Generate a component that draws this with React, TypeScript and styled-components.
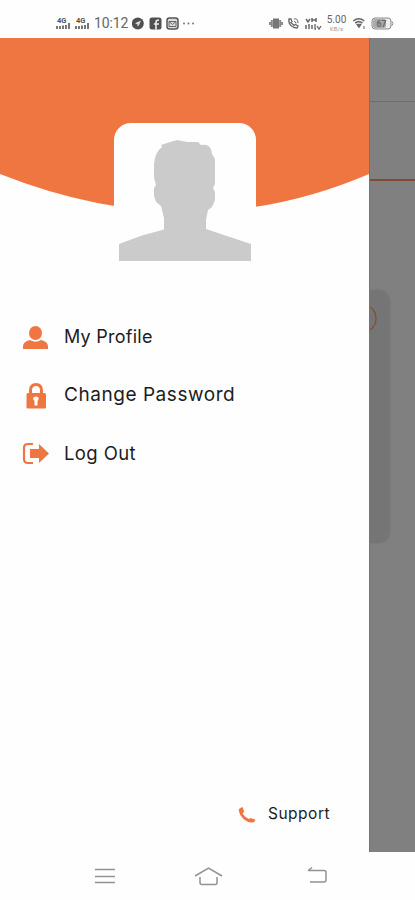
import React from "react";
import styled, { createGlobalStyle } from "styled-components";

const ORANGE = "#ef7541";

const GlobalStyle = createGlobalStyle`
  * { box-sizing: border-box; }
  body { margin: 0; background: #fff; font-family: Inter, "Open Sans", sans-serif; }
  svg { display: block; flex: none; }
`;

const Screen = styled.div`
  width: 415px;
  height: 900px;
  display: flex;
  flex-direction: column;
  overflow: hidden;
  background: #fefefe;
`;

const StatusBar = styled.header`
  height: 38px;
  flex: none;
  display: flex;
  justify-content: space-between;
  padding: 15px 21px 0 56px;
  color: #666;
`;

const StatusGroup = styled.div<{ $gap: number }>`
  display: flex;
  align-items: center;
  height: 17px;
  gap: ${(p) => p.$gap}px;
`;

const Clock = styled.span`
  font: 14px/17px Roboto, sans-serif;
  width: 34px;
  white-space: nowrap;
  letter-spacing: -0.1px;
`;

const Speed = styled.div`
  width: 21px;
  display: flex;
  flex-direction: column;
  align-items: center;
  font: 10px/10px Roboto, sans-serif;
`;

const SpeedUnit = styled.span`
  font-size: 6px;
  line-height: 7px;
  color: #999;
`;

const Body = styled.div`
  height: 814px;
  flex: none;
  display: flex;
`;

const Drawer = styled.aside`
  width: 369px;
  flex: none;
  display: flex;
  flex-direction: column;
  background: #fefefe;
`;

const Hero = styled.div`
  position: relative;
  height: 270px;
  padding: 85px 0 0 114px;
`;

const Curve = styled.svg`
  position: absolute;
  inset: 0;
`;

const Avatar = styled.div`
  position: relative;
  width: 142px;
  height: 143px;
  border-radius: 17px 17px 0 0;
  background: #fefefe;
`;

const Menu = styled.nav`
  display: flex;
  flex-direction: column;
  flex: 1;
`;

const MenuItem = styled.a`
  height: 58px;
  display: flex;
  align-items: center;
  padding-left: 22px;
  gap: 15px;
`;

const Label = styled.span<{ $size: number; $spacing?: number }>`
  font-size: ${(p) => p.$size}px;
  letter-spacing: ${(p) => p.$spacing ?? 0}px;
  font-weight: 400;
  line-height: 24px;
  color: #1c1c1c;
  white-space: nowrap;
`;

const Support = styled.a`
  display: flex;
  align-items: center;
  gap: 12px;
  height: 24px;
  margin: 0 0 26px 238px;
`;

const Backdrop = styled.main`
  flex: 1;
  display: flex;
  flex-direction: column;
  overflow: hidden;
  background: #808080;
  border-left: 1px solid #707575;
`;

const AppHeader = styled.div`
  height: 64px;
  flex: none;
  border-bottom: 1px solid #6e6e6e;
`;

const TabStrip = styled.div`
  height: 79px;
  flex: none;
  border-bottom: 2px solid #804a30;
`;

const Panel = styled.div`
  width: 20px;
  height: 253px;
  margin-top: 109px;
  padding-top: 16px;
  border-radius: 0 12px 12px 0;
  background: #757575;
  box-shadow: 0 0 3px #777;
`;

const NavBar = styled.footer`
  height: 48px;
  display: flex;
  align-items: center;
  padding-left: 93px;
`;

const NavButton = styled.span<{ $width: number }>`
  width: ${(p) => p.$width}px;
`;

const Signal = () => (
  <svg width="15" height="15" viewBox="0 0 15 15">
    <text x="1" y="7" fontSize="7.5" fontWeight="700" fontFamily="Roboto, sans-serif" fill="#555">4G</text>
    <path d="M1 10v3M4 10v3M7 9.5v3.5M10 9v4M13 7v6" stroke="#555" strokeWidth="1.6" />
  </svg>
);

export default function App() {
  return (
    <>
      <GlobalStyle />
      <Screen>
        <StatusBar>
          <StatusGroup $gap={4}>
            <Signal />
            <Signal />
            <Clock>10:12</Clock>
            <svg width="13" height="13" viewBox="0 0 13 13">
              <circle cx="5.8" cy="6.5" r="6" fill="#505050" />
              <path d="M3 6.2 9 3.6 7 8.2 5.3 9.5 5.6 7.4z" fill="#ddd" />
            </svg>
            <svg width="13" height="13" viewBox="0 0 13 13">
              <rect x=".5" y=".5" width="12" height="12" rx="2.5" fill="#505050" />
              <path d="M7 12.5V5q0-2 3-2M4.8 7H10" fill="none" stroke="#eee" strokeWidth="1.6" />
            </svg>
            <svg width="13" height="13" viewBox="0 0 13 13">
              <rect x="1" y="1" width="11" height="11" rx="2.5" fill="#ddd" stroke="#555" strokeWidth="1.5" />
              <path d="M3 4.5h7v5H3zM3 4.5l3.5 3 3.5-3" fill="none" stroke="#666" />
            </svg>
            <svg width="14" height="5" viewBox="0 0 14 5" fill="#777">
              <circle cx="1" cy="2.5" r="1" /><circle cx="5.500" cy="2.5" r="1" /><circle cx="10" cy="2.5" r="1" />
            </svg>
          </StatusGroup>
          <StatusGroup $gap={4.5}>
            <svg width="14" height="13" viewBox="0 0 14 13">
              <path d="M4 1.500h6v10H4z" fill="#777" />
              <path d="M2.800 3v7M11.200 3v7M.7 5v3M13.3 5v3" stroke="#888" strokeWidth="2" />
            </svg>
            <svg width="13" height="13" viewBox="0 0 13 13" fill="none" stroke="#666">
              <path d="M2 2c-1 5 3 9 8 9l1-2-2.5-1.5L7 8.5 4 5.5l1-1L4 2z" strokeWidth="1.3" />
              <path d="M7 2q4-1 4 4M7 4.5q2 0 2 2" />
            </svg>
            <svg width="17" height="14" viewBox="0 0 17 14" fill="none" stroke="#666">
              <path d="M1 2l2 3 2-3M7 1v4M11 1v4M7 3h4M1 8v4M4 7v5M7 8v4" strokeWidth="1.5" />
              <path d="M10 7v5h1M12 9l2 3 2-3" strokeWidth="1.3" />
            </svg>
            <Speed>
              5.00
              <SpeedUnit>KB/s</SpeedUnit>
            </Speed>
            <svg width="15" height="13" viewBox="0 0 15 13" fill="none" stroke="#666">
              <path d="M1.3 4q5.5-4.5 11 0M3.2 6q3.6-2.8 7.2 0" strokeWidth="1.6" />
              <path d="M4.7 7.3h4.5L7 10.7z" fill="#666" />
              <path d="M12 9v3" />
            </svg>
            <svg width="23" height="13" viewBox="0 0 23 13">
              <rect x="1" y="1" width="19" height="11" rx="3" fill="#eee" stroke="#888" />
              <rect x="2" y="2" width="13" height="9" rx="2" fill="#aaa" />
              <path d="M21 4.5q2 2 0 4" fill="none" stroke="#888" />
              <text x="5.5" y="9.7" fontSize="8.5" fontWeight="700" fontFamily="Roboto, sans-serif" fill="#666">67</text>
            </svg>
          </StatusGroup>
        </StatusBar>

        <Body>
          <Drawer>
            <Hero>
              <Curve width="369" height="176" viewBox="0 0 369 176">
                <path d="M0 0H369V136Q192 212 0 136Z" fill={ORANGE} />
              </Curve>
              <Avatar>
                <svg width="142" height="143" viewBox="0 0 142 143">
                  <path
                    d="M5 138V121L28 112.500 50 106.500V95L47 83 42 79 40 73V65L42 62 40 55V41Q41 29 48 24L47 22 53 20 63 17 73 19H84L87 22Q97 20 98 31L101 36V61L99 65 101 69V77L98 84 94 87 92 97V106L113 113 137 121V138Z"
                    fill="#cbcbcb"
                  />
                </svg>
              </Avatar>
            </Hero>
            <Menu>
              <MenuItem>
                <svg width="27" height="26" viewBox="0 0 27 26" fill={ORANGE}>
                  <ellipse cx="13.500" cy="9" rx="6.500" ry="7" />
                  <path d="M1 25v-2.500q0-5 7-6.500 5.500 3.500 11 0 7 1.500 7 6.500V25z" />
                </svg>
                <Label $size={18} $spacing={0.25}>My Profile</Label>
              </MenuItem>
              <MenuItem>
                <svg width="27" height="28" viewBox="0 0 27 28">
                  <path d="M8.500 13V9.500q0-6 5.500-6t5.500 6V13" fill="none" stroke={ORANGE} strokeWidth="3" />
                  <rect x="4.500" y="12" width="19.500" height="15.500" rx="1.500" fill={ORANGE} />
                  <path d="M12.500 20q-3.500-4 1.500-4.500 4.500.5 1.500 4.500v4.500h-3z" fill="#fff" />
                </svg>
                <Label $size={19} $spacing={0.55}>Change Password</Label>
              </MenuItem>
              <MenuItem>
                <svg width="27" height="24" viewBox="0 0 27 24">
                  <path d="M11 3H6Q2 3 2 7v11q0 4 4 4h5" fill="none" stroke={ORANGE} strokeWidth="2.200" />
                  <path d="M8 8h9V3l10 9.500L17 22v-5H8z" fill={ORANGE} />
                </svg>
                <Label $size={18.5} $spacing={0.4}>Log Out</Label>
              </MenuItem>
            </Menu>
            <Support>
              <svg width="18" height="18" viewBox="0 0 18 18">
                <path
                  d="M1 4 4 2Q5 2 5.500 4.500L6 7 4.500 8.500Q6.500 12 11 14L12.500 13 17 14.500Q18 15.500 16 17 12 19 6 14.500 0 8.500 1 4Z"
                  fill={ORANGE}
                />
              </svg>
              <Label $size={15.5} $spacing={0.5}>Support</Label>
            </Support>
          </Drawer>
          <Backdrop>
            <AppHeader />
            <TabStrip />
            <Panel>
              <svg width="9" height="25" viewBox="0 0 9 25">
                <path d="M0 1Q6 5 6 12.500T0 24" fill="none" stroke="#8b4c30" strokeWidth="1.300" />
              </svg>
            </Panel>
          </Backdrop>
        </Body>

        <NavBar>
          <NavButton $width={101}>
            <svg width="23" height="20" viewBox="0 0 23 20">
              <path d="M2 3.500h20M2 10.500h20M2 16.500h20" stroke="#929292" strokeWidth="1.500" />
            </svg>
          </NavButton>
          <NavButton $width={112}>
            <svg width="29" height="21" viewBox="0 0 29 21" fill="none" stroke="#929292" strokeWidth="1.500">
              <path d="M1 10 14.500 2 28 10M6 11v5.500q0 2 2 2h13q2 0 2-2V11" />
            </svg>
          </NavButton>
          <NavButton $width={23}>
            <svg width="23" height="20" viewBox="0 0 23 20" fill="none" stroke="#929292" strokeWidth="1.500">
              <path d="M2 4.500h16q2 0 2 2V14q0 2-2 2H4M6 1.500 2 4.500" />
            </svg>
          </NavButton>
        </NavBar>
      </Screen>
    </>
  );
}
